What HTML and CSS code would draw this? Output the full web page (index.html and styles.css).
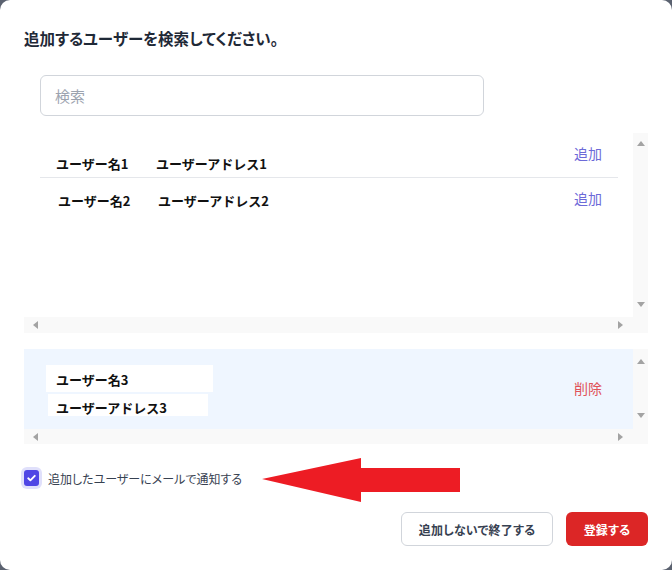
FILE: index.html
```html
<!DOCTYPE html>
<html lang="ja">
<head>
<meta charset="utf-8">
<title>ユーザー追加</title>
<link rel="stylesheet" href="styles.css">
</head>
<body>
<div class="modal">
  <h1 class="title">追加するユーザーを検索してください。</h1>
  <div class="search"><span class="placeholder">検索</span></div>

  <div class="scrollbox list1">
    <div class="content">
      <div class="row row1">
        <div class="names"><span class="name">ユーザー名1</span><span class="addr">ユーザーアドレス1</span></div>
        <span class="link add">追加</span>
      </div>
      <div class="row row2">
        <div class="names"><span class="name">ユーザー名2</span><span class="addr">ユーザーアドレス2</span></div>
        <span class="link add">追加</span>
      </div>
    </div>
    <div class="vscroll"><i class="tri up"></i><i class="tri down"></i></div>
    <div class="hscroll"><i class="tri left"></i><i class="tri right"></i></div>
    <div class="corner"></div>
  </div>

  <div class="scrollbox list2">
    <div class="content selected">
      <div class="fields">
        <div class="field f1">ユーザー名3</div>
        <div class="field f2">ユーザーアドレス3</div>
      </div>
      <span class="link del">削除</span>
    </div>
    <div class="vscroll"><i class="tri up"></i><i class="tri down"></i></div>
    <div class="hscroll"><i class="tri left"></i><i class="tri right"></i></div>
    <div class="corner"></div>
  </div>

  <label class="check">
    <span class="box"><svg viewBox="0 0 16 16" width="16" height="16"><path d="M4.5 8.3l2.3 2.2 4.7-4.8" fill="none" stroke="#fff" stroke-width="2" stroke-linecap="round" stroke-linejoin="round"/></svg></span>
    <span class="check-label">追加したユーザーにメールで通知する</span>
  </label>

  <div class="actions">
    <button class="btn secondary">追加しないで終了する</button>
    <button class="btn primary">登録する</button>
  </div>

  <svg class="arrow" width="200" height="46" viewBox="0 0 200 46">
    <polygon points="0,21 99,0 99,10 198,10 198,34 99,34 99,44" fill="#ed1c24"/>
  </svg>
</div>
</body>
</html>
```

FILE: styles.css
```css
html, body {
  margin: 0;
  padding: 0;
}
body {
  background: #5b6270;
  font-family: "Noto Sans CJK JP", "Noto Sans", sans-serif;
  width: 672px;
  height: 570px;
  overflow: hidden;
}
.modal {
  position: relative;
  box-sizing: border-box;
  width: 672px;
  height: 570px;
  background: #fff;
  border-radius: 10px;
  padding: 26px 24px 0 24px;
  display: flex;
  flex-direction: column;
}
.title {
  margin: 0;
  font-size: 15.5px;
  line-height: 24px;
  font-weight: 700;
  color: #1f2937;
  font-feature-settings: "palt";
}
.search {
  box-sizing: border-box;
  margin: 25px 0 0 16px;
  width: 444px;
  height: 41px;
  border: 1px solid #d1d5db;
  border-radius: 6px;
  display: flex;
  align-items: center;
  padding-left: 14px;
}
.placeholder {
  font-size: 15px;
  color: #9ca3af;
}
.scrollbox {
  display: grid;
  grid-template-columns: 609px 15px;
}
.list1 {
  margin-top: 17px;
  grid-template-rows: 184px 16px;
}
.list2 {
  margin-top: 16px;
  grid-template-rows: 80px 15px;
}
.content {
  background: #fff;
  padding: 0 15px 0 16px;
  overflow: hidden;
}
.vscroll {
  background: #f9f9f9;
  display: flex;
  flex-direction: column;
  justify-content: space-between;
  align-items: center;
  padding: 8px 0 10px;
}
.list2 .vscroll {
  padding: 10px 0 11px;
}
.hscroll {
  background: #f9f9f9;
  display: flex;
  justify-content: space-between;
  align-items: center;
  padding: 0 10px 0 9px;
}
.corner {
  background: #f9f9f9;
}
.tri {
  display: block;
  width: 0;
  height: 0;
}
.tri.up {
  border-left: 4px solid transparent;
  border-right: 4px solid transparent;
  border-bottom: 5px solid #a3a3a3;
}
.tri.down {
  border-left: 4px solid transparent;
  border-right: 4px solid transparent;
  border-top: 5px solid #a3a3a3;
}
.tri.left {
  border-top: 4px solid transparent;
  border-bottom: 4px solid transparent;
  border-right: 5px solid #a3a3a3;
}
.tri.right {
  border-top: 4px solid transparent;
  border-bottom: 4px solid transparent;
  border-left: 5px solid #a3a3a3;
}
.row {
  display: flex;
  align-items: flex-start;
}
.row1 {
  padding-top: 10px;
  height: 34px;
  border-bottom: 1px solid #e5e7eb;
}
.row2 {
  padding-top: 10px;
}
.names {
  display: flex;
  font-size: 13px;
  font-weight: 700;
  line-height: 20px;
  color: #111;
}
.row1 .names {
  margin: 11px 0 0 16px;
}
.row2 .names {
  margin: 3px 0 0 18px;
}
.name {
  width: 100px;
}
.link {
  margin-left: auto;
  margin-right: 16px;
  font-size: 14px;
  line-height: 20px;
}
.add {
  color: #6d6ad8;
}
.del {
  color: #e0525a;
  margin-top: -3px;
}
.selected {
  background: #eff6ff;
  display: flex;
  align-items: center;
}
.fields {
  display: flex;
  flex-direction: column;
  margin-left: 6px;
  margin-top: 3px;
  font-size: 13px;
  font-weight: 700;
  color: #111;
}
.field {
  background: #fff;
  box-sizing: border-box;
  padding-left: 10px;
}
.f1 {
  width: 167px;
  height: 27px;
  line-height: 30px;
}
.f2 {
  width: 160px;
  height: 22px;
  line-height: 28px;
  margin: 2px 0 0 2px;
  padding-left: 8px;
}
.check {
  display: flex;
  align-items: center;
  margin-top: 22px;
  height: 24px;
}
.box {
  width: 15px;
  height: 16px;
  border-radius: 3px;
  background: #4f46e5;
  box-shadow: 0 0 0 3px #e0e0fb;
  display: flex;
  align-items: center;
  justify-content: center;
}
.check-label {
  margin-left: 9px;
  font-size: 12px;
  color: #374151;
  font-feature-settings: "palt";
}
.actions {
  display: flex;
  justify-content: flex-end;
  gap: 13px;
  margin-top: 22px;
}
.btn {
  font-family: inherit;
  box-sizing: border-box;
  height: 34px;
  border-radius: 6px;
  font-size: 12px;
  font-weight: 700;
  padding: 0;
  white-space: nowrap;
  text-align: center;
  font-feature-settings: "palt";
  letter-spacing: 0.2px;
}
.secondary {
  width: 152px;
  background: #fff;
  color: #374151;
  border: 1px solid #d1d5db;
}
.primary {
  width: 82px;
  background: #dc2626;
  color: #fff;
  border: none;
}
.arrow {
  position: absolute;
  left: 262px;
  top: 458px;
}
```
